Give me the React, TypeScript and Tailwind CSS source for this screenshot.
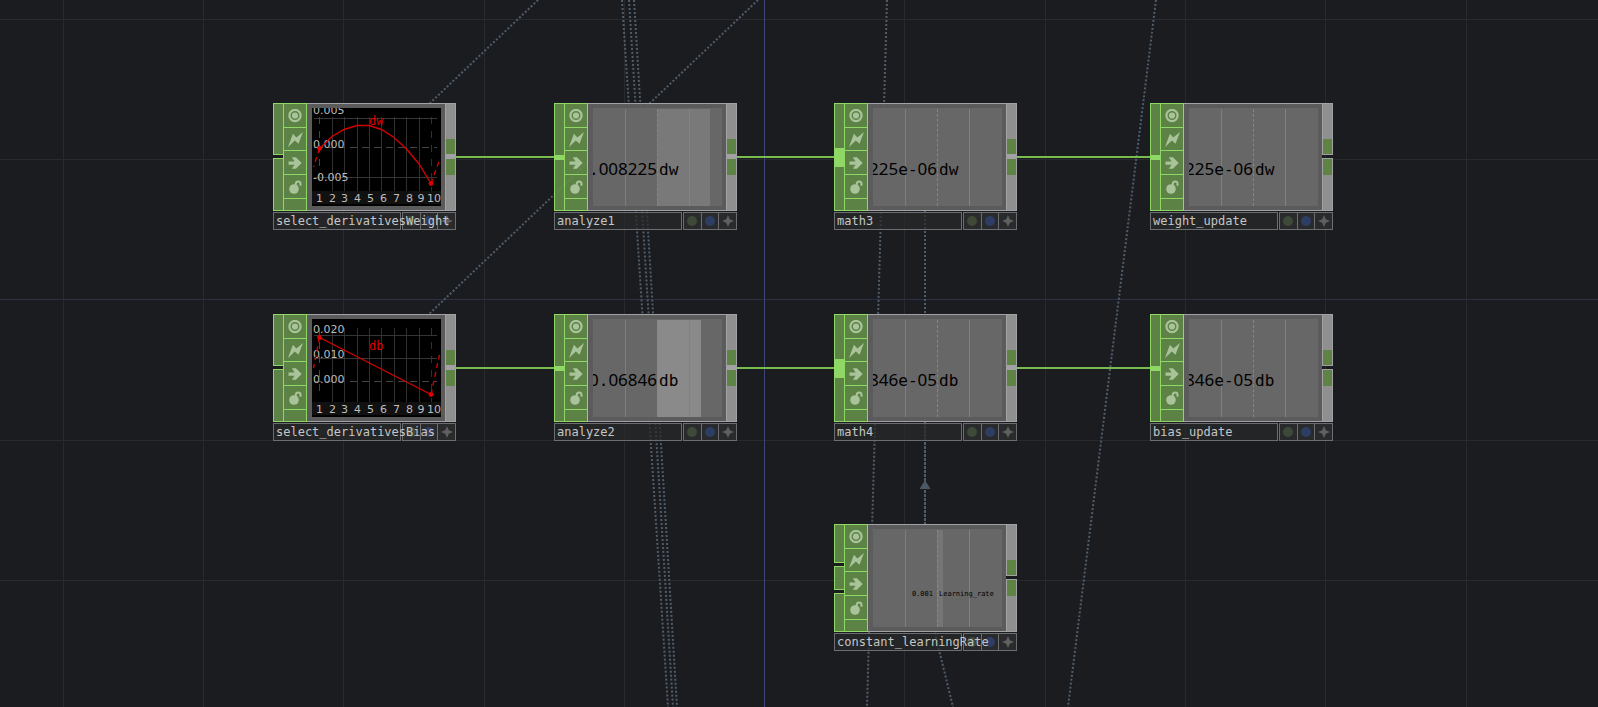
import React from "react";

type Viewer =
  | { kind: "chart"; title: string; titleY: number; rows: { y: number; text: string; line: number; dashed?: boolean }[]; curve: [number, number][]; before: [number, number]; after: [number, number] }
  | { kind: "value"; value: string; channel: string; bar?: string; small?: boolean };

type NodeSpec = {
  id: string;
  place: string;
  input: "open" | "linked" | "multi" | "double";
  outputLinked: boolean;
  viewer: Viewer;
};

const nodes: NodeSpec[] = [
  {
    id: "select_derivativesWeight",
    place: "left-[273px] top-[103px]",
    input: "open",
    outputLinked: true,
    viewer: {
      kind: "chart",
      title: "dw",
      titleY: 17,
      rows: [
        { y: 6, text: "0.005", line: 10 },
        { y: 40, text: "0.000", line: 39, dashed: true },
        { y: 73, text: "-0.005", line: 69 },
      ],
      curve: [[7.5, 40.5], [20, 28.5], [32, 21.5], [45, 17.5], [57, 17.5], [69.5, 21.5], [82, 29.5], [94.5, 41], [107, 56], [119, 75.5]],
      before: [1.5, 59],
      after: [127.5, 52],
    },
  },
  {
    id: "analyze1",
    place: "left-[554px] top-[103px]",
    input: "linked",
    outputLinked: true,
    viewer: { kind: "value", value: ".008225", channel: "dw", bar: "w-[53px] bg-[#797979]" },
  },
  {
    id: "math3",
    place: "left-[834px] top-[103px]",
    input: "multi",
    outputLinked: true,
    viewer: { kind: "value", value: "225e-06", channel: "dw" },
  },
  {
    id: "weight_update",
    place: "left-[1150px] top-[103px]",
    input: "linked",
    outputLinked: false,
    viewer: { kind: "value", value: "225e-06", channel: "dw" },
  },
  {
    id: "select_derivativesBias",
    place: "left-[273px] top-[314px]",
    input: "open",
    outputLinked: true,
    viewer: {
      kind: "chart",
      title: "db",
      titleY: 31,
      rows: [
        { y: 14, text: "0.020", line: 16 },
        { y: 39, text: "0.010", line: 39 },
        { y: 64, text: "0.000", line: 62, dashed: true },
      ],
      curve: [[7.5, 18.5], [119, 75.5]],
      before: [1.5, 49],
      after: [127.5, 36],
    },
  },
  {
    id: "analyze2",
    place: "left-[554px] top-[314px]",
    input: "linked",
    outputLinked: true,
    viewer: { kind: "value", value: "0.06846", channel: "db", bar: "w-[44px] bg-[#8a8a8a]" },
  },
  {
    id: "math4",
    place: "left-[834px] top-[314px]",
    input: "multi",
    outputLinked: true,
    viewer: { kind: "value", value: "846e-05", channel: "db" },
  },
  {
    id: "bias_update",
    place: "left-[1150px] top-[314px]",
    input: "linked",
    outputLinked: false,
    viewer: { kind: "value", value: "846e-05", channel: "db" },
  },
  {
    id: "constant_learningRate",
    place: "left-[834px] top-[524px]",
    input: "double",
    outputLinked: false,
    viewer: { kind: "value", value: "0.001", channel: "Learning_rate", bar: "w-[6px] bg-[#757575]", small: true },
  },
];

const gridColumns = [63, 203, 343, 484, 624, 904, 1045, 1185, 1325, 1466];
const gridRows = [19, 159, 440, 580];

const references: [number, number, number, number][] = [
  [538, 0, 427, 106],
  [758, 0, 427, 316],
  [622, 0, 668, 707],
  [629, 0, 673, 707],
  [634, 0, 677, 707],
  [887, 0, 867, 707],
  [1156, 0, 1068, 707],
  [925, 211, 925, 524],
  [933, 625, 953, 707],
];

const links: [number, number, number][] = [
  [456, 554, 157],
  [737, 834, 157],
  [1017, 1150, 157],
  [456, 554, 368],
  [737, 834, 368],
  [1017, 1150, 368],
];

function Wires() {
  return (
    <svg className="absolute inset-0 h-full w-full" aria-hidden="true">
      <g shapeRendering="crispEdges" strokeWidth="1">
        {gridColumns.map((x) => (
          <line key={x} x1={x + 0.5} x2={x + 0.5} y1="0" y2="100%" stroke="#292a2e" />
        ))}
        {gridRows.map((y) => (
          <line key={y} x1="0" x2="100%" y1={y + 0.5} y2={y + 0.5} stroke="#292a2e" />
        ))}
        <line x1="0" x2="100%" y1="299.5" y2="299.5" stroke="#2e2e47" />
        <line x1="764.5" x2="764.5" y1="0" y2="100%" stroke="#42427a" />
      </g>
      <g stroke="#4f5d6b" strokeWidth="2" strokeDasharray="2 2">
        {references.map(([x1, y1, x2, y2], i) => (
          <line key={i} x1={x1} y1={y1} x2={x2} y2={y2} />
        ))}
        <line x1="925" y1="422" x2="925" y2="524" strokeDasharray="3 1" />
      </g>
      <path d="M925 480 L930.500 489 H919.500 Z" fill="#4a5866" />
      <g stroke="#76bd4d" strokeWidth="2">
        {links.map(([x1, x2, y]) => (
          <line key={`${x1}-${y}`} x1={x1} x2={x2} y1={y} y2={y} />
        ))}
      </g>
    </svg>
  );
}

const tickX = [7.5, 20.5, 32.5, 45.5, 58.5, 71.5, 84.5, 97.5, 109, 122];
const columnX = [20, 32, 45, 57, 69, 82, 94, 107];

function Chart({ spec }: { spec: Extract<Viewer, { kind: "chart" }> }) {
  const first = spec.curve[0];
  const last = spec.curve[spec.curve.length - 1];
  return (
    <svg width="129" height="98" viewBox="0 0 129 98" className="block bg-black font-['DejaVu_Sans']" role="img" aria-label={spec.title}>
      <rect y="83" width="129" height="13" fill="#111111" />
      <g stroke="#303030" strokeWidth="1" shapeRendering="crispEdges">
        {columnX.map((x) => (
          <line key={x} x1={x + 0.5} x2={x + 0.5} y1="9" y2="83" />
        ))}
        {spec.rows.map((r) => (
          <line key={r.line} x1="2" x2="125" y1={r.line + 0.5} y2={r.line + 0.5} stroke={r.dashed ? "#444444" : "#363636"} strokeDasharray={r.dashed ? "7 5" : undefined} />
        ))}
        <line x1="7.5" x2="7.5" y1="9" y2="77" stroke="#444444" strokeDasharray="7 7" />
        <line x1="119.5" x2="119.5" y1="9" y2="83" strokeDasharray="7 7" stroke="#303030" />
      </g>
      <g fill="#bdbdbd" fontSize="11">
        {spec.rows.map((r) => (
          <text key={r.text} x="1" y={r.y}>{r.text}</text>
        ))}
        {tickX.map((x, i) => (
          <text key={x} x={x} y="94" textAnchor="middle">{i + 1}</text>
        ))}
      </g>
      <g stroke="#d40000" fill="none" strokeWidth="1.4">
        <polyline points={spec.curve.map((p) => p.join(",")).join(" ")} />
        <path d={`M${first.join(" ")} L${spec.before.join(" ")} M${last.join(" ")} L${spec.after.join(" ")}`} strokeDasharray="5 4" />
      </g>
      <circle cx={first[0]} cy={first[1]} r="2.4" fill="#dd0000" />
      <circle cx={last[0]} cy={last[1]} r="2.4" fill="#dd0000" />
      <text x="57" y={spec.titleY} fontSize="12" fill="#dd0000" className="font-['DejaVu_Sans_Mono']">{spec.title}</text>
    </svg>
  );
}

function ValueView({ spec }: { spec: Extract<Viewer, { kind: "value" }> }) {
  const runs = spec.small ? [spec.value] : spec.value.split(/(\D+)/).filter(Boolean);
  return (
    <div className="relative h-[98px] w-[129px] overflow-hidden bg-[#676767]">
      <div className="absolute inset-0 flex pt-px">
        <div className="w-[33px] border-r border-[#7e7e7e]" />
        <div className="w-[31px]" />
        <div className={`absolute top-px bottom-0 left-16 ${spec.bar ?? ""}`} />
        <div className="relative w-8 border-l border-dashed border-[#868686]" />
        <div className="relative border-l border-[#828282]" />
      </div>
      <div
        className={`absolute inset-x-0 flex h-5 items-baseline font-['DejaVu_Sans_Mono'] leading-5 text-black ${
          spec.small ? "top-[55px] text-[7px]" : "top-[51px] text-[16px]"
        }`}
      >
        <div className={`flex w-16 shrink-0 items-baseline justify-end ${spec.small ? "pr-1" : ""}`}>
          {runs.map((run, i) => (
            <span key={i} className={spec.small || /\D/.test(run) ? "" : "font-['Noto_Sans'] text-[17px]"}>
              {run}
            </span>
          ))}
        </div>
        <span className="pl-0.5">{spec.channel}</span>
      </div>
    </div>
  );
}

const socket = "border border-r-0 border-[#8fd866] bg-[#658e49]/90";

function InputColumn({ input }: { input: NodeSpec["input"] }) {
  if (input === "open") {
    return (
      <div className="flex w-2.5 flex-col gap-[3px]">
        <div className={`h-[52px] ${socket}`} />
        <div className={`flex-1 ${socket}`} />
      </div>
    );
  }
  if (input === "double") {
    return (
      <div className="flex w-2.5 flex-col gap-[3px]">
        <div className={`h-[39px] ${socket}`} />
        <div className={`h-6 ${socket}`} />
        <div className={`flex-1 ${socket}`} />
      </div>
    );
  }
  return (
    <div className={`flex w-2.5 flex-col justify-center ${socket}`}>
      <div className={input === "multi" ? "h-[19px] bg-[#8fd866]" : "h-[5px] bg-[#8fd866]"} />
    </div>
  );
}

function OutputColumn({ linked }: { linked: boolean }) {
  return (
    <div className={`flex w-[11px] flex-col ${linked ? "" : "gap-[3px]"}`}>
      <div className="flex h-[52px] flex-col justify-end border border-[#a2a2a6] bg-[#969696]/95">
        <div className="h-[15px] bg-[#5e8345]" />
      </div>
      {linked && <div className="h-[3px] bg-[#a2a2a6]" />}
      <div className="flex-1 border border-[#a2a2a6] bg-[#969696]/95">
        <div className="h-4 bg-[#5e8345]" />
      </div>
    </div>
  );
}

const flagButton = "flex w-full items-center justify-center border-b border-[#8fd866] pt-px";

function FlagColumn() {
  return (
    <div className="flex w-6 flex-col border border-[#8fd866] bg-[#658e49]/90 text-[#a9c49a]">
      <button type="button" aria-label="Viewer active" className={`h-6 ${flagButton}`}>
        <svg width="14" height="14" viewBox="0 0 14 14">
          <circle cx="7" cy="6.500" r="5.600" fill="none" stroke="currentColor" strokeWidth="2.200" />
          <circle cx="7" cy="6.500" r="3.100" fill="currentColor" />
        </svg>
      </button>
      <button type="button" aria-label="Cooking" className={`h-[23px] ${flagButton}`}>
        <svg width="15" height="15" viewBox="0 0 14 14" fill="currentColor">
          <path d="M0 14 L4.600 1.600 L7.800 5.200 L14 0 L9.800 11 L6.400 8 Z" />
        </svg>
      </button>
      <button type="button" aria-label="Bypass" className={`h-6 ${flagButton}`}>
        <svg width="14" height="14" viewBox="0 0 14 14" fill="currentColor">
          <path d="M0.500 5.400 H6.600 L3.800 1.200 H7.900 L13.700 7 L7.900 12.800 H3.800 L6.600 8.800 H0.500 Z" />
        </svg>
      </button>
      <button type="button" aria-label="Lock" className={`h-6 ${flagButton}`}>
        <svg width="14" height="14" viewBox="0 0 14 14">
          <circle cx="6" cy="9" r="4.800" fill="currentColor" />
          <path d="M7.700 6 V4 Q7.700 1.400 10.200 1.400 Q12.500 1.400 12.500 3.800 V5.800" fill="none" stroke="currentColor" strokeWidth="2" />
        </svg>
      </button>
    </div>
  );
}

function OperatorNode({ spec }: { spec: NodeSpec }) {
  return (
    <article className={`absolute flex w-[183px] flex-col gap-px ${spec.place}`}>
      <div className="flex h-[108px]">
        <InputColumn input={spec.input} />
        <FlagColumn />
        <div className="flex flex-1 items-center justify-end border-y border-[#a2a2a6] bg-[#5f5f5f]/95 pr-1">
          {spec.viewer.kind === "chart" ? <Chart spec={spec.viewer} /> : <ValueView spec={spec.viewer} />}
        </div>
        <OutputColumn linked={spec.outputLinked} />
      </div>
      <div className="flex h-[18px] gap-px">
        <h2 className="z-10 w-32 border border-[#6c6d70] bg-[#28292b]/70 pl-0.5 font-['DejaVu_Sans_Mono'] text-[12px] leading-4 whitespace-nowrap text-[#c6c6c6]">
          {spec.id}
        </h2>
        <div className="flex flex-1 divide-x divide-[#6c6d70] border border-[#6c6d70] bg-[#2b2c2e]/90">
          <button type="button" aria-label="Display" className="flex flex-1 items-center justify-center">
            <span className="size-2.5 rounded-full bg-[#3e4937]" />
          </button>
          <button type="button" aria-label="Render" className="flex flex-1 items-center justify-center">
            <span className="size-2.5 rounded-full bg-[#2d3d63]" />
          </button>
          <button type="button" aria-label="Activate viewer" className="flex flex-1 items-center justify-center">
            <svg width="12" height="12" viewBox="0 0 12 12" fill="#606060">
              <path d="M6 0 L7.800 4.200 L12 6 L7.800 7.800 L6 12 L4.200 7.800 L0 6 L4.200 4.200 Z" />
            </svg>
          </button>
        </div>
      </div>
    </article>
  );
}

export default function App() {
  return (
    <main className="relative h-screen w-full overflow-hidden bg-[#1b1c20]">
      <Wires />
      {nodes.map((spec) => (
        <OperatorNode key={spec.id} spec={spec} />
      ))}
    </main>
  );
}
